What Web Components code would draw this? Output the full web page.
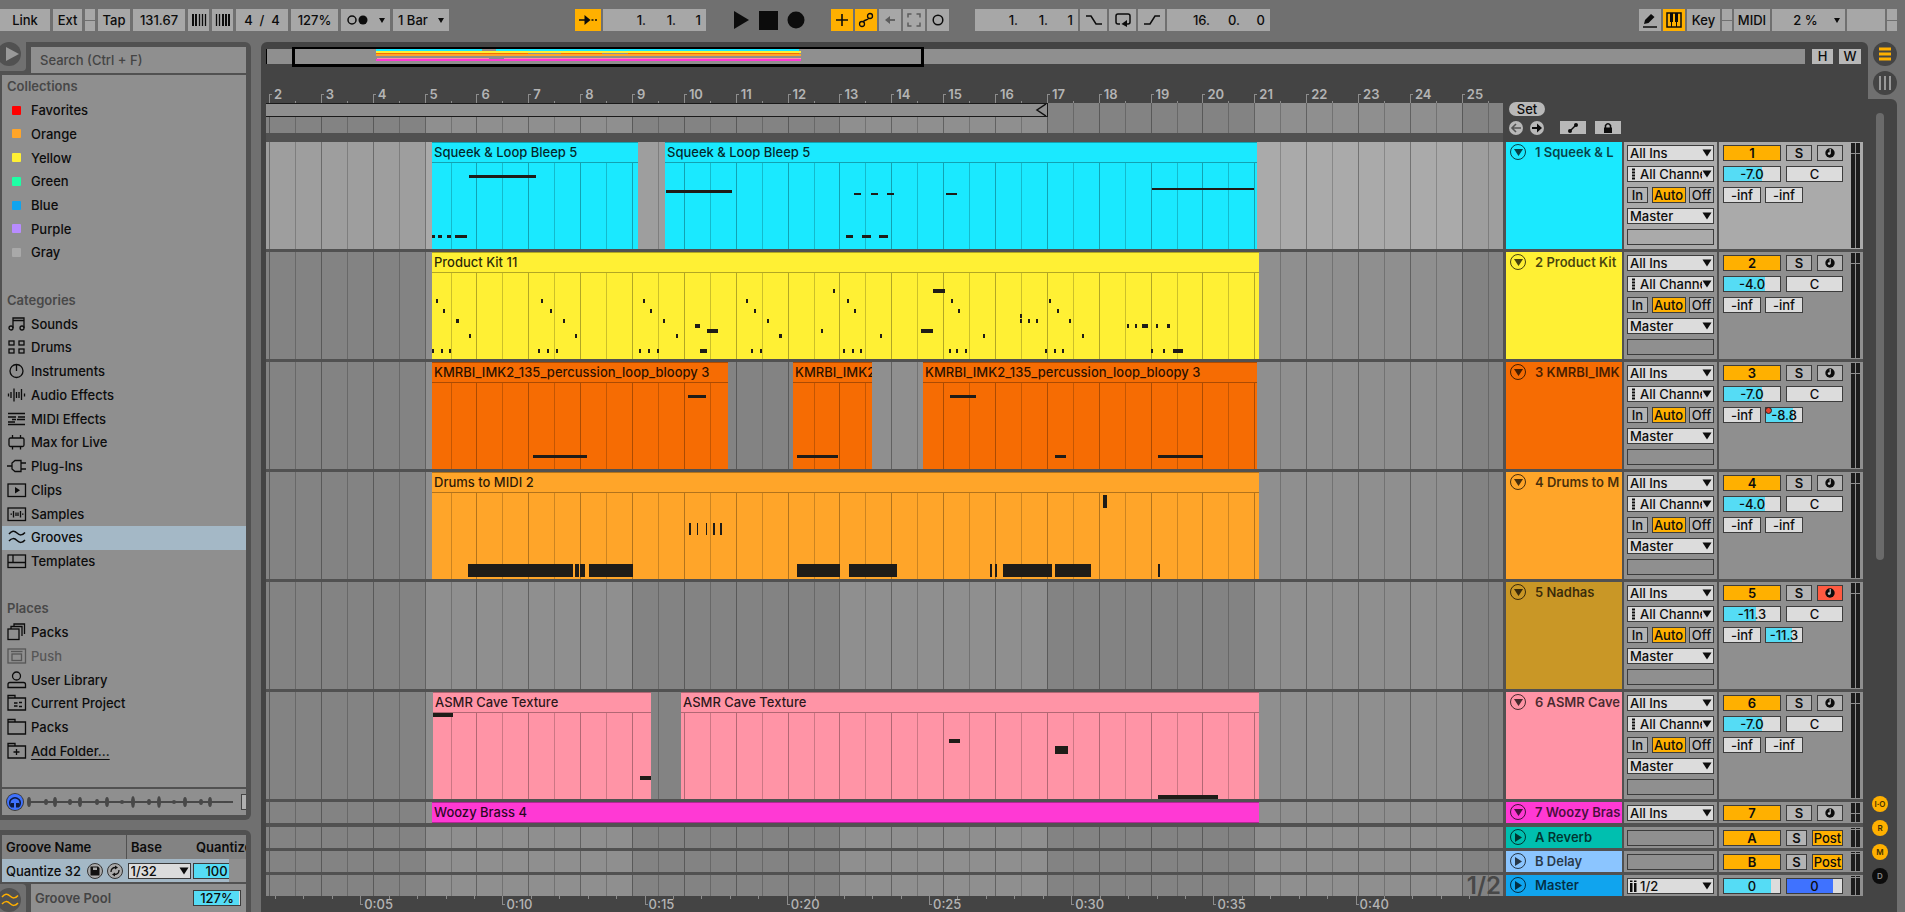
<!DOCTYPE html>
<html lang="en">
<head>
<meta charset="utf-8">
<title>Arrangement</title>
<style>
  html, body { height: 100%; margin: 0; }
  body {
    background: #707070;
    color: #0c0c0c;
    font: 500 13px/16px Inter, "Liberation Sans", sans-serif;
    overflow: hidden;
  }
</style>
</head>
<body>
<daw-app></daw-app>

<script>
// ---------- helpers ----------
const define = (name, html, setup) => {
  const template = document.createElement('template');
  template.innerHTML = html;
  customElements.define(name, class extends HTMLElement {
    connectedCallback() {
      if (this.shadowRoot) return;
      this.attachShadow({ mode: 'open' }).appendChild(template.content.cloneNode(true));
      if (setup) setup(this, this.shadowRoot);
    }
  });
};

// ---------- icons ----------
const line = 'fill="none" stroke="currentColor" stroke-width="1.3"';
const ICONS = {
  play: [18, 18, '<path d="M2 0L17 9L2 18z" fill="currentColor"/>'],
  stop: [19, 19, '<rect width="19" height="19" fill="currentColor"/>'],
  record: [18, 18, '<circle cx="9" cy="9" r="8.500" fill="currentColor"/>'],
  nudgeDown: [16, 14, '<path d="M2 1v12M5 1v12" stroke="currentColor" stroke-width="2"/><path d="M8.500 1v12M11.500 1v12M14.500 1v12" stroke="currentColor" stroke-width="1.300"/>'],
  nudgeUp: [16, 14, '<path d="M1.500 1v12M4.500 1v12" stroke="currentColor" stroke-width="1.300"/><path d="M8 1v12M11 1v12M14 1v12" stroke="currentColor" stroke-width="2"/>'],
  metro: [22, 12, '<circle cx="6" cy="6" r="4" fill="none" stroke="currentColor" stroke-width="1.500"/><circle cx="17" cy="6" r="4.500" fill="currentColor"/>'],
  follow: [20, 12, '<path d="M1 6h7M13.500 6h2M17 6h2" stroke="currentColor" stroke-width="1.600"/><path d="M6.500 1L12.500 6L6.500 11z" fill="currentColor"/>'],
  plus: [14, 14, '<path d="M7 1v12M1 7h12" stroke="currentColor" stroke-width="1.600"/>'],
  automation: [16, 16, `<g ${line}><circle cx="4" cy="12" r="2.500"/><circle cx="12" cy="4" r="2.500"/><path d="M5 10C7 7 9 9 11 6"/></g>`],
  back: [12, 12, '<path d="M3 6h8" stroke="currentColor" stroke-width="1.800"/><path d="M1 6L6 2v8z" fill="currentColor"/>'],
  corners: [14, 14, '<path d="M1 4.500V1h3.500M9.500 1H13v3.500M13 9.500V13H9.500M4.500 13H1V9.500" fill="none" stroke="currentColor" stroke-width="1.500"/>'],
  circle: [12, 12, '<circle cx="6" cy="6" r="4.800" fill="none" stroke="currentColor" stroke-width="1.500"/>'],
  punchIn: [18, 14, '<path d="M1 3h5L11 11h6" fill="none" stroke="currentColor" stroke-width="1.500"/>'],
  punchOut: [18, 14, '<path d="M1 11h6L12 3h5" fill="none" stroke="currentColor" stroke-width="1.500"/>'],
  loop: [18, 16, '<path d="M6 12H4Q2 12 2 10V4Q2 2 4 2h10Q16 2 16 4v6Q16 12 14 12h-2" fill="none" stroke="currentColor" stroke-width="1.500"/><path d="M13 8v7L7.500 12z" fill="currentColor"/>'],
  pencil: [16, 16, '<path d="M2 12l1-4 6-6 3.500 3-6 6z" fill="currentColor"/><path d="M1 15h14" stroke="currentColor" stroke-width="1.500"/>'],
  piano: [16, 16, '<rect x="1" y="1" width="14" height="14" fill="none" stroke="currentColor" stroke-width="1.500"/><path d="M5.500 1v14M10.500 1v14" stroke="currentColor"/><path d="M5.500 1v9M10.500 1v9" stroke="currentColor" stroke-width="3"/>'],
  notes: [20, 16, `<g ${line}><path d="M6 12V2h11v10M6 4.500h11"/><circle cx="4" cy="12" r="2"/><circle cx="15" cy="12" r="2"/></g>`],
  drums: [20, 16, `<g ${line}><rect x="2" y="2" width="5" height="4"/><rect x="12" y="2" width="5" height="4"/><rect x="2" y="10" width="5" height="4"/><rect x="12" y="10" width="5" height="4"/></g>`],
  dial: [20, 16, `<g ${line}><circle cx="9.500" cy="8" r="6.500"/><path d="M9.500 1.500V8"/></g>`],
  audio: [20, 16, `<path d="M1.500 6.500v3M4 5v6M7 1.500v13M9.500 5v6M12 5v6M14.500 2v11M17.500 6.500v3" ${line}/>`],
  midi: [20, 16, `<path d="M1 2.500h17M1 13.500h17M1 6h8M11 6h7M5 8.500h4M10 8.500h8M1 11h7" ${line}/>`],
  max: [20, 16, `<g ${line}><rect x="2" y="4" width="15" height="8.500" rx="1.500"/><path d="M5.500 1v3M13.500 1v3M5.500 12.500v3M13.500 12.500v3"/></g>`],
  plug: [20, 16, `<g ${line}><path d="M0 8h5M14 5h5M14 11h5"/><path d="M14 2.500H8L5 5v6l3 2.500h6z"/></g>`],
  clip: [20, 16, `<rect x="1" y="2" width="17.500" height="12.500" ${line}/><path d="M8 5l5 3.200L8 11.500z" fill="currentColor"/>`],
  sample: [20, 16, `<rect x="1" y="2" width="17.500" height="12.500" ${line}/><path d="M3.500 8.200h1.500M6.500 5v6.500M9 6.500v3.500M11 6.500v3.500M13.500 5v6.500M15 8.200h1.500" ${line}/>`],
  groove: [20, 16, `<path d="M2 5Q6 0 10 4T18 3.500M2 12Q6 7.500 10 11.500T18 11" fill="none" stroke="currentColor" stroke-width="1.500"/>`],
  template: [20, 16, `<g ${line}><rect x="1" y="2" width="17.500" height="12.500"/><path d="M1 9.500h17.500M6 2v7.500"/></g>`],
  packs: [20, 18, `<g ${line}><rect x="1" y="6" width="11" height="10.500"/><path d="M4 6V3.500h11V13M7 3.500V1h10.500v10"/></g>`],
  push: [20, 16, `<g ${line}><rect x="1" y="1" width="17.500" height="14"/><rect x="5" y="6" width="9.500" height="6.500"/><path d="M4 3.500h11.500"/></g>`],
  user: [20, 18, `<g ${line}><circle cx="9.500" cy="5" r="4"/><path d="M1 16.500v-3Q1 11.500 3 11.500h13.500Q18.500 11.500 18.500 13.500v3z"/></g>`],
  project: [20, 18, `<g ${line}><path d="M1 16V1.500h7V4h10.500v12zM1 4h7M7 9h3.500M7 12h3.500M12 8.500h3M12 12.500h3"/></g>`],
  folder: [20, 18, `<path d="M1 16V1.500h7V4h10.500v12zM1 4h7" ${line}/>`],
  addFolder: [20, 18, `<path d="M1 16V1.500h7V4h10.500v12zM1 4h7M9.500 7v6M6.500 10h6" ${line}/>`],
  headphones: [16, 16, '<path d="M4 12.500Q1.500 8.500 4 5.500Q8 2 12 5.500Q14.500 8.500 12 12.500" fill="none" stroke="currentColor" stroke-width="1.600"/><path d="M4 9h3v4.500H4zM9 9h3v4.500H9z" fill="currentColor"/>'],
  disk: [12, 12, '<path d="M1.500 1.500h7.500L10.500 3V10.500h-9z" fill="currentColor"/><path d="M4 2.500h4v2.500h-4z" fill="#aaa"/>'],
  swap: [12, 12, `<path d="M2 7Q2 2.500 6.500 2.500M10 5Q10 9.500 5.500 9.500" ${line}/><path d="M6 0.500l3 2L6 4.500zM6 7.500L3 9.500L6 11.500z" fill="currentColor"/>`],
  arm: [10, 10, '<circle cx="5" cy="5" r="4.700" fill="currentColor"/><circle cx="4.200" cy="5.600" r="1.400" fill="#c4c4c4"/><path d="M5.200 5.600V1" stroke="#c4c4c4" stroke-width="1.200"/>'],
  left: [12, 10, '<path d="M2 5h9M6 1L2 5l4 4" fill="none" stroke="currentColor" stroke-width="1.600"/>'],
  right: [12, 10, '<path d="M1 5h8" stroke="currentColor" stroke-width="2"/><path d="M6 0.500L11 5L6 9.500z" fill="currentColor"/>'],
  link: [12, 10, '<path d="M3 8L9 2" stroke="currentColor" stroke-width="1.500"/><circle cx="3" cy="8" r="2" fill="currentColor"/><circle cx="9" cy="2" r="2" fill="currentColor"/>'],
  lock: [12, 12, '<path d="M2 5.500h8V11H2z" fill="currentColor"/><path d="M3.500 6V3.500Q6 0 8.500 3.500V6" fill="none" stroke="currentColor" stroke-width="1.500"/>'],
  dots: [8, 12, '<path d="M3 0.500h3v2H3zM3 3.500h3v2H3zM3 6.500h3v2H3zM3 9.500h3v2H3z" fill="currentColor"/>'],
  stereo: [8, 12, '<path d="M1 3h2.500v9H1zM5 3h2.500v9H5zM1 0.500h2.500v1.500H1zM5 0.500h2.500v1.500H5z" fill="currentColor"/>'],
  down: [10, 8, '<path d="M0.500 0.500h9L5 7.500z" fill="currentColor"/>'],
  rows: [12, 14, '<path d="M0 2h12M0 7h12M0 12h12" stroke="currentColor" stroke-width="3"/>'],
  cols: [14, 14, '<path d="M2 0v14M7 0v14M12 0v14" stroke="currentColor" stroke-width="2"/>']
};

define('daw-icon', `
  <style>:host { display: block; flex: none; } svg { display: block; }</style>
`, (host, root) => {
  const [w, h, body] = ICONS[host.getAttribute('name')];
  root.innerHTML += `<svg width="${w}" height="${h}" viewBox="0 0 ${w} ${h}" aria-hidden="true">${body}</svg>`;
});

// ---------- transport controls ----------
define('tool-button', `
  <style>
    :host { display: block; flex: none; width: var(--w, auto); }
    button {
      display: flex; align-items: center; justify-content: center;
      width: 100%; height: 22px; padding: 0; border: 0;
      background: #a7a7a7; color: inherit; font: inherit;
    }
    :host([on]) button { background: #ffb000; }
    :host([dim]) button { color: #5c5c5c; }
    :host([bare]) button { background: none; }
  </style>
  <button type="button"><slot></slot></button>
`, (host, root) => {
  if (host.title) root.querySelector('button').setAttribute('aria-label', host.title);
});

define('tool-select', `
  <style>
    :host { display: flex; flex: none; align-items: center; width: var(--w); height: 22px; background: #a7a7a7; box-sizing: border-box; padding: 0 5px; }
    select { flex: 1; min-width: 0; padding: 0; border: 0; background: none; appearance: none; color: inherit; font: inherit; text-align: center; }
    :host([start]) select { text-align: left; }
    i { border: 3px solid transparent; border-top: 5px solid; border-bottom: 0; }
  </style>
  <slot></slot><select></select><i></i>
`, (host, root) => {
  const select = root.querySelector('select');
  select.setAttribute('aria-label', host.getAttribute('label'));
  select.innerHTML = `<option>${host.getAttribute('value') || ''}</option>`;
});

define('tool-position', `
  <style>
    :host { display: grid; flex: none; grid-template-columns: 43px 30px 25px; padding-right: 5px; background: #a7a7a7; height: 22px; }
    input { min-width: 0; padding: 0; border: 0; background: none; color: inherit; font: inherit; text-align: right; }
  </style>
`, (host, root) => {
  host.getAttribute('value').split(' ').forEach((part, i) => {
    const input = document.createElement('input');
    input.value = part;
    input.setAttribute('aria-label', host.getAttribute('label') + ' ' + ['bar', 'beat', 'sixteenth'][i]);
    root.append(input);
  });
});

define('tool-nub', `
  <style>
    :host { display: grid; flex: none; width: 10px; height: 22px; gap: 1px; }
    i { background: #a7a7a7; }
  </style>
  <i></i><i></i>
`);

define('daw-transport', `
  <style>
    :host { display: flex; align-items: center; height: 22px; padding: 9px 8px 11px 0; }
    div { display: flex; align-items: center; gap: 2px; }
    .setup { gap: 3px; }
    .mid { gap: 26px; margin-left: 126px; }
    .keys { gap: 9px; }
    .right { margin-left: auto; }
    input { width: 52px; height: 22px; box-sizing: border-box; padding: 0; border: 0; background: #a7a7a7; color: inherit; font: inherit; text-align: center; }
    .pct { width: 47px; }
    .blank { width: 38px; height: 22px; background: #a7a7a7; }
  </style>
  <div class="setup">
    <tool-button style="--w: 50px">Link</tool-button>
    <tool-button style="--w: 29px">Ext</tool-button>
    <tool-nub></tool-nub>
    <tool-button style="--w: 32px">Tap</tool-button>
    <input aria-label="Tempo" value="131.67">
    <tool-button style="--w: 21px" title="Nudge down"><daw-icon name="nudgeDown"></daw-icon></tool-button>
    <tool-button style="--w: 21px" title="Nudge up"><daw-icon name="nudgeUp"></daw-icon></tool-button>
    <input aria-label="Time signature" value="4  /  4">
    <input class="pct" aria-label="Global groove" value="127%">
    <tool-select style="--w: 49px" label="Metronome"><daw-icon name="metro"></daw-icon></tool-select>
    <tool-select start style="--w: 56px" label="Quantization" value="1 Bar"></tool-select>
  </div>
  <div class="mid">
    <div>
      <tool-button on style="--w: 26px" title="Follow"><daw-icon name="follow"></daw-icon></tool-button>
      <tool-position label="Position" value="1. 1. 1"></tool-position>
    </div>
    <div class="keys">
      <tool-button bare title="Play"><daw-icon name="play"></daw-icon></tool-button>
      <tool-button bare title="Stop"><daw-icon name="stop"></daw-icon></tool-button>
      <tool-button bare title="Record"><daw-icon name="record"></daw-icon></tool-button>
    </div>
    <div>
      <tool-button on style="--w: 22px" title="Overdub"><daw-icon name="plus"></daw-icon></tool-button>
      <tool-button on style="--w: 22px" title="Automation arm"><daw-icon name="automation"></daw-icon></tool-button>
      <tool-button dim style="--w: 22px" title="Re-enable automation"><daw-icon name="back"></daw-icon></tool-button>
      <tool-button dim style="--w: 22px" title="Capture"><daw-icon name="corners"></daw-icon></tool-button>
      <tool-button style="--w: 22px" title="Session record"><daw-icon name="circle"></daw-icon></tool-button>
    </div>
    <div>
      <tool-position label="Loop start" value="1. 1. 1"></tool-position>
      <tool-button style="--w: 27px" title="Punch in"><daw-icon name="punchIn"></daw-icon></tool-button>
      <tool-button style="--w: 27px" title="Loop"><daw-icon name="loop"></daw-icon></tool-button>
      <tool-button style="--w: 27px" title="Punch out"><daw-icon name="punchOut"></daw-icon></tool-button>
      <tool-position label="Loop length" value="16. 0. 0"></tool-position>
    </div>
  </div>
  <div class="right">
    <tool-button style="--w: 22px" title="Draw mode"><daw-icon name="pencil"></daw-icon></tool-button>
    <tool-button on style="--w: 22px" title="Computer keyboard"><daw-icon name="piano"></daw-icon></tool-button>
    <tool-button style="--w: 33px">Key</tool-button>
    <tool-nub></tool-nub>
    <tool-button style="--w: 36px">MIDI</tool-button>
    <tool-select style="--w: 73px" label="CPU load" value="2 %"></tool-select>
    <span class="blank"></span>
    <tool-nub></tool-nub>
  </div>
`);

// ---------- browser ----------
define('browser-item', `
  <style>
    :host { display: flex; min-height: 0; }
    a {
      display: grid; grid-template-columns: 20px 1fr; gap: 4px; align-items: center;
      flex: 1; padding: 0 0 1px 5px; color: inherit; text-decoration: none;
    }
    :host([selected]) a { background: #a4b8c6; }
    :host([dim]) { color: #565656; }
    :host([under]) span { text-decoration: underline; text-underline-offset: 3px; }
    i { width: 9px; height: 9px; margin-left: 5px; border-radius: 1px; }
  </style>
  <a href="#"><b></b><span><slot></slot></span></a>
`, (host, root) => {
  const mark = root.querySelector('b');
  const color = host.getAttribute('color');
  mark.innerHTML = color ? `<i style="display:block;background:${color}"></i>` : `<daw-icon name="${host.getAttribute('icon')}"></daw-icon>`;
});

define('browser-panel', `
  <style>
    :host { display: flex; flex-direction: column; flex: 1; min-height: 0; background: #515151; border-radius: 0 6px 6px 0; padding: 0 5px 5px 0; }
    .top { display: flex; }
    .tab { width: 26px; height: 29px; background: #707070; border-radius: 0 0 4px 0; overflow: hidden; }
    .tab button { display: flex; align-items: center; justify-content: center; width: 24px; height: 24px; margin: 0 0 0 -3px; padding: 0 0 0 6px; box-sizing: border-box; border: 0; border-radius: 50%; background: #515151; color: #999; }
    .search { flex: 1; min-width: 0; height: 26px; box-sizing: border-box; margin: 5px 0 0 5px; padding: 0 9px; border: 0; background: #8f8f8f; color: #333; font: inherit; }
    .search::placeholder { color: #444; opacity: 1; }
    nav { display: grid; grid-template-rows: repeat(30, minmax(0, 1fr)); flex: 1; min-height: 0; margin: 2px 0 2px 2px; background: #8f8f8f; }
    h2 { display: flex; align-items: center; margin: 0; padding: 0 0 1px 5px; font: inherit; font-weight: 600; color: #484848; }
    .preview { display: flex; align-items: center; height: 26px; margin-left: 2px; padding-left: 5px; gap: 4px; background: #8f8f8f; overflow: hidden; }
    .preview button { flex: none; padding: 0; width: 16px; height: 16px; border: 0; border-radius: 50%; background: #3f72ff; color: #0d1a40; box-shadow: 0 0 0 1px #3a3a3a; }
    .preview svg { flex: 1; min-width: 0; height: 16px; }
    .preview i { flex: none; width: 4px; height: 14px; border: 1px solid #444; border-right: 0; background: #b0b0b0; }
  </style>
  <div class="top">
    <div class="tab"><button type="button" aria-label="Hide browser"><svg width="13" height="14"><path d="M0 0l13 7l-13 7z" fill="currentColor"/></svg></button></div>
    <input class="search" type="search" aria-label="Search" placeholder="Search (Ctrl + F)">
  </div>
  <nav>
    <h2>Collections</h2>
    <browser-item color="#ff0000">Favorites</browser-item>
    <browser-item color="#ffa529">Orange</browser-item>
    <browser-item color="#fff034">Yellow</browser-item>
    <browser-item color="#1effa5">Green</browser-item>
    <browser-item color="#10a4ee">Blue</browser-item>
    <browser-item color="#b88cff">Purple</browser-item>
    <browser-item color="#a9a9a9">Gray</browser-item>
    <span></span>
    <h2>Categories</h2>
    <browser-item icon="notes">Sounds</browser-item>
    <browser-item icon="drums">Drums</browser-item>
    <browser-item icon="dial">Instruments</browser-item>
    <browser-item icon="audio">Audio Effects</browser-item>
    <browser-item icon="midi">MIDI Effects</browser-item>
    <browser-item icon="max">Max for Live</browser-item>
    <browser-item icon="plug">Plug-Ins</browser-item>
    <browser-item icon="clip">Clips</browser-item>
    <browser-item icon="sample">Samples</browser-item>
    <browser-item icon="groove" selected>Grooves</browser-item>
    <browser-item icon="template">Templates</browser-item>
    <span></span>
    <h2>Places</h2>
    <browser-item icon="packs">Packs</browser-item>
    <browser-item icon="push" dim>Push</browser-item>
    <browser-item icon="user">User Library</browser-item>
    <browser-item icon="project">Current Project</browser-item>
    <browser-item icon="folder">Packs</browser-item>
    <browser-item icon="addFolder" under>Add Folder...</browser-item>
    <span></span>
  </nav>
  <div class="preview">
    <button type="button" aria-label="Preview"><daw-icon name="headphones"></daw-icon></button>
    <svg viewBox="0 0 210 16" preserveAspectRatio="none" fill="#484848"></svg>
    <i></i>
  </div>
`, (host, root) => {
  // small hits alternate with loud ones along the loop
  const hits = [[2, 5], [19, 3], [28, 5], [43, 3], [53, 5], [70, 3], [80, 5], [95, 2], [106, 6], [122, 3], [132, 6], [147, 2], [158, 5], [174, 3], [183, 5], [199, 1]];
  root.querySelector('.preview svg').innerHTML = '<rect y="7" width="206" height="2"/>' +
    hits.map(([x, r]) => `<ellipse cx="${x}" cy="8" rx="2" ry="${r}"/>`).join('');
});

define('groove-pool', `
  <style>
    :host { display: block; background: #515151; border-radius: 0 6px 0 0; padding: 5px 5px 0 2px; }
    .clip { overflow: hidden; background: #838383; }
    table { width: 100%; table-layout: fixed; border-collapse: collapse; }
    th { height: 24px; padding: 0 0 0 3px; text-align: left; font-weight: 600; overflow: hidden; white-space: nowrap; }
    th:first-child { width: 120px; border-right: 1px solid #515151; padding-left: 4px; }
    th:nth-child(2) { width: 62px; padding-left: 4px; }
    td { height: 23px; padding: 0; background: #a4b8c6; }
    td:nth-child(2) { padding-left: 1px; }
    .name { display: flex; align-items: center; gap: 4px; padding: 0 4px; }
    .name span { flex: 1; }
    .name button { display: flex; align-items: center; justify-content: center; width: 16px; height: 16px; box-sizing: border-box; padding: 0; border: 1px solid #333; border-radius: 50%; background: #aaa; color: #111; }
    .amount { display: flex; background: #8f8f8f; }
    .amount span { display: flex; align-items: center; width: 36px; flex: none; height: 23px; overflow: hidden; background: #a4b8c6; }
    .foot { display: flex; align-items: center; margin: 2px 0 0 -2px; height: 28px; }
    .tab { align-self: start; display: flex; width: 26px; height: 28px; background: #707070; border-radius: 0 4px 0 0; align-items: end; }
    .tab button { width: 24px; height: 24px; flex: none; margin: 0 0 0 -3px; padding: 3px; border: 0; border-radius: 50%; background: #515151; color: #ffb000; }
    .pool { display: flex; flex: 1; height: 28px; align-items: center; justify-content: space-between; margin-left: 5px; padding: 0 5px 0 4px; background: #8f8f8f; color: #444; font-weight: 600; }
    .pool strip-value { color: #0c0c0c; font-weight: 500; }
  </style>
  <div class="clip"><table>
    <thead><tr><th>Groove Name</th><th>Base</th><th>Quantize</th></tr></thead>
    <tbody><tr>
      <td><div class="name"><span>Quantize 32</span>
        <button type="button" aria-label="Save groove"><daw-icon name="disk"></daw-icon></button>
        <button type="button" aria-label="Hot-swap groove"><daw-icon name="swap"></daw-icon></button></div></td>
      <td><strip-select style="--w: 63px" label="Base" value="1/32"></strip-select></td>
      <td><div class="amount"><span><strip-value style="--w: 47px; --fill: 100%" label="Quantize" value="100"></strip-value></span></div></td>
    </tr></tbody>
  </table></div>
  <div class="foot">
    <div class="tab"><button type="button" aria-label="Groove pool"><daw-icon name="groove"></daw-icon></button></div>
    <div class="pool"><span>Groove Pool</span><strip-value style="--w: 48px; --fill: 97%" label="Groove amount" value="127%"></strip-value></div>
  </div>
`);

// ---------- track strip controls ----------
define('strip-select', `
  <style>
    :host { display: flex; align-items: center; flex: none; width: var(--w, auto); height: 16px; box-sizing: border-box; border: 1px solid #3c3c3c; padding: 0 1px; background: #dcdcdc; overflow: hidden; }
    select { flex: 1; min-width: 0; height: 14px; padding: 0 0 0 1px; border: 0; background: none; appearance: none; color: inherit; font: inherit; line-height: 14px; overflow: hidden; text-overflow: clip; }
  </style>
  <select></select><daw-icon name="down"></daw-icon>
`, (host, root) => {
  const select = root.querySelector('select');
  const icon = host.getAttribute('icon');
  select.setAttribute('aria-label', host.getAttribute('label'));
  select.innerHTML = `<option>${host.getAttribute('value')}</option>`;
  if (icon) {
    const el = document.createElement('daw-icon');
    el.setAttribute('name', icon);
    el.style.marginRight = '2px';
    root.insertBefore(el, select);
  }
});

define('strip-value', `
  <style>
    :host { display: block; flex: none; width: var(--w); height: 16px; }
    input {
      display: block; width: 100%; height: 16px; box-sizing: border-box; padding: 0; border: 1px solid #3c3c3c;
      background: linear-gradient(to right, var(--bar, #55dcf5) var(--fill, 0%), #dcdcdc var(--fill, 0%));
      color: inherit; font: inherit; text-align: center;
    }
    :host([marked]) { position: relative; }
    :host([marked])::before { content: ""; position: absolute; left: 0; top: 0; width: 5px; height: 5px; border: 1px solid #222; border-radius: 50%; background: #e8432e; }
  </style>
  <input>
`, (host, root) => {
  const input = root.querySelector('input');
  input.value = host.getAttribute('value');
  input.setAttribute('aria-label', host.getAttribute('label'));
});

define('strip-button', `
  <style>
    :host { display: block; flex: none; width: var(--w); height: 16px; }
    button { display: flex; align-items: center; justify-content: center; width: 100%; height: 16px; box-sizing: border-box; padding: 0; border: 1px solid #3c3c3c; background: #b4b4b4; color: inherit; font: inherit; overflow: hidden; }
    :host([on]) button { background: #ffb000; }
    :host([armed]) button { background: #ff5a41; }
    :host([strong]) button { font-weight: 600; }
  </style>
  <button type="button"><slot></slot></button>
`, (host, root) => {
  if (host.title) root.querySelector('button').setAttribute('aria-label', host.title);
});

// ---------- timeline geometry ----------
// The visible span is 1237 units wide; bar 2 starts 3 units in.
const SPAN = 1237, BAR = 51.86, ORIGIN = 3 - 2 * BAR;
const barAt = n => ORIGIN + n * BAR;
const pct = u => (u / SPAN * 100).toFixed(3) + '%';
const halfBars = () => Array.from({ length: 48 }, (_, i) => 2 + i / 2);

const gridSvg = (light, dark) => {
  const bands = [1, 9, 17, 25].map(n => {
    const from = Math.max(0, barAt(n));
    return `<rect x="${pct(from)}" width="${pct(Math.min(SPAN, barAt(n + 4)) - from)}" height="100%" fill="${dark}"/>`;
  }).join('');
  const lines = halfBars().map(n => `<rect x="${pct(barAt(n))}" width="1" height="100%" fill="#000" fill-opacity="${n % 1 ? .2 : .32}"/>`).join('');
  return `<svg width="100%" height="100%" shape-rendering="crispEdges" style="background:${light}" aria-hidden="true">${bands}${lines}</svg>`;
};

// ---------- tracks ----------
const row = (y, h, list) => list.map(n => Array.isArray(n) ? [n[0], y, n[1], h] : [n, y, 2, h]);
const TRACKS = [
  {
    name: '1 Squeek & L', id: '1', color: '#1ae9ff', volume: '-7.0', fill: 67, sends: [['-inf', 0], ['-inf', 0]], lit: true,
    clips: [[166, 372, 'Squeek & Loop Bleep 5'], [399, 991, 'Squeek & Loop Bleep 5']],
    notes: [...row(33, 3, [[203, 67]]), ...row(93, 3, [[166, 3], [172, 4], [181, 4], [189, 12], [580, 7], [596, 9], [613, 9]]),
      ...row(48, 3, [[400, 66]]), ...row(51, 2, [[588, 7], [605, 7], [621, 7], [680, 11]]), ...row(46, 2, [[886, 102]])]
  },
  {
    name: '2 Product Kit', id: '2', color: '#fff034', volume: '-4.0', fill: 74, sends: [['-inf', 0], ['-inf', 0]],
    clips: [[166, 993, 'Product Kit 11']],
    notes: [...row(37, 4, [567, [667, 12]]), ...row(47, 4, [170, 275, 377, 480, 581, 685, 783]),
      ...row(57, 4, [177, 284, 384, 488, 588, 692, 791]), ...row(62, 4, [754]),
      ...row(67, 4, [[190, 3], 297, 397, 501, 754, 762, 770, 803]),
      ...row(72, 4, [[429, 5], 861, 869, [876, 6], 890, [901, 3]]), ...row(77, 4, [[441, 11], 555, [655, 12]]),
      ...row(82, 4, [203, 309, 410, [513, 3], 614, 717, 816]),
      ...row(97, 4, [166, 175, 183, 272, 281, 290, 373, 382, 391, [434, 7], 485, 494, 577, 586, 594, 683, 690, 699, 779, 788, 796, 885, 897, [907, 10]])]
  },
  {
    name: '3 KMRBI_IMK', id: '3', color: '#f66c03', volume: '-7.0', fill: 67, sends: [['-inf', 0], ['-8.8', 76, true]],
    clips: [[166, 462, 'KMRBI_IMK2_135_percussion_loop_bloopy 3'], [527, 606, 'KMRBI_IMK2'], [657, 991, 'KMRBI_IMK2_135_percussion_loop_bloopy 3']],
    notes: [...row(33, 3, [[422, 18], [684, 26]]), ...row(93, 3, [[267, 54], [531, 41], [789, 11], [892, 45]])]
  },
  {
    name: '4 Drums to M', id: '4', color: '#ffa529', volume: '-4.0', fill: 74, sends: [['-inf', 0], ['-inf', 0]],
    clips: [[166, 993, 'Drums to MIDI 2']],
    notes: [...row(92, 13, [[202, 105], [309, 4], [314, 5], [323, 44], [531, 43], [583, 48], 724, 729, [737, 49], [789, 36], 892]),
      ...row(51, 12, [423, [431, 1], [440, 1], 447, 454]), ...row(23, 13, [[837, 4]])]
  },
  {
    name: '5 Nadhas', id: '5', color: '#c99726', volume: '-11.3', fill: 57, sends: [['-inf', 0], ['-11.3', 71]], armed: true,
    clips: [], notes: []
  },
  {
    name: '6 ASMR Cave', id: '6', color: '#ff94a6', volume: '-7.0', fill: 67, sends: [['-inf', 0], ['-inf', 0]],
    clips: [[167, 385, 'ASMR Cave Texture'], [415, 993, 'ASMR Cave Texture']],
    notes: [...row(21, 4, [[167, 20]]), ...row(84, 4, [[374, 11]]), ...row(47, 4, [[683, 11]]), ...row(54, 8, [[789, 13]]), ...row(103, 4, [[892, 60]])]
  },
  { name: '7 Woozy Bras', id: '7', color: '#ff39d4', kind: 'folded', clips: [[166, 993, 'Woozy Brass 4']], notes: [] },
  { name: 'A Reverb', id: 'A', color: '#00bfaf', kind: 'return', clips: [], notes: [] },
  { name: 'B Delay', id: 'B', color: '#8bc5ff', kind: 'return', clips: [], notes: [] },
  { name: 'Master', id: 'M', color: '#10a4ee', kind: 'master', clips: [], notes: [] }
];

define('track-lane', `
  <style>
    :host { display: block; position: relative; flex: 1; min-width: 0; overflow: hidden; }
    svg, .clip { position: absolute; top: 0; height: 100%; }
    svg { left: 0; }
    .clip { box-sizing: border-box; overflow: hidden; border-top: 1px solid rgba(0, 0, 0, .3); }
    .clip span { display: block; height: 19px; padding-left: 2px; border-bottom: 1px solid rgba(0, 0, 0, .3); line-height: 19px; white-space: nowrap; color: rgba(0, 0, 0, .85); }
    .grid { position: absolute; right: 2px; top: 0; font-size: 24px; line-height: 21px; font-weight: 600; color: #484848; }
  </style>
`, (host, root) => {
  const t = host.track;
  let html = t.lit ? gridSvg('#aaaaaa', '#9e9e9e') : gridSvg('#8f8f8f', '#838383');
  html += t.clips.map(([a, b, label]) =>
    `<div class="clip" style="left:${pct(a)};width:${pct(b - a)};background:${t.color}"><span>${label.replace('&', '&amp;')}</span></div>`).join('');
  if (t.clips.length && !t.kind) {
    const inClip = u => t.clips.some(([a, b]) => u > a && u < b);
    html += '<svg width="100%" height="100%" shape-rendering="crispEdges" aria-hidden="true">' +
      halfBars().map(n => inClip(barAt(n)) ? `<rect x="${pct(barAt(n))}" y="21" width="1" height="100%" fill="#000" fill-opacity="${n % 1 ? .2 : .3}"/>` : '').join('') +
      t.notes.map(([x, y, w, h]) => `<rect x="${pct(x)}" y="${y}" width="${pct(w)}" height="${h}" fill="#1f1c18"/>`).join('') + '</svg>';
  }
  if (t.kind === 'master') html += '<span class="grid">1/2</span>';
  root.innerHTML += html;
});

define('track-row', `
  <style>
    :host { display: flex; }
    .head { display: grid; flex: none; grid-template-columns: 116px 93px 144px; gap: 2px; margin-left: 3px; }
    .title { display: flex; align-items: start; gap: 9px; padding: 2px 0 0 4px; overflow: hidden; white-space: nowrap; font-weight: 600; color: rgba(0, 0, 0, .72); }
    .title button { flex: none; display: flex; align-items: center; justify-content: center; width: 16px; height: 16px; margin: 0; padding: 0; box-sizing: border-box; border: 1px solid currentColor; border-radius: 50%; background: none; color: inherit; }
    .io, .mix { background: #8f8f8f; padding: 3px 3px 2px; }
    .lit .io, .lit .mix { background: #aaa; }
    .io { display: flex; flex-direction: column; gap: 5px; }
    .full .io { padding-bottom: 4px; }
    .mix { display: flex; justify-content: space-between; padding: 3px 3px 0 4px; }
    .knobs { display: flex; flex-direction: column; gap: 5px; }
    .line { display: flex; justify-content: space-between; }
    .knobs .line { width: 120px; }
    .knobs .sends { justify-content: start; gap: 4px; }
    .blank { height: 14px; border: 1px solid #3c3c3c; }
    .meter { display: flex; gap: 1px; margin: -2px 0 1px; background: #8f8f8f; }
    .meter i { width: 4px; background: linear-gradient(#1c1c1c 10px, #8f8f8f 10px, #8f8f8f 11px, #1c1c1c 11px); }
    .short .meter i { background: linear-gradient(#1c1c1c 1px, #8f8f8f 1px, #8f8f8f 2px, #1c1c1c 2px); }
  </style>
  <div class="head"></div>
`, (host, root) => {
  const t = host.track;
  const head = root.querySelector('.head');
  const lane = document.createElement('track-lane');
  lane.track = t;
  root.insertBefore(lane, head);

  const full = !t.kind;
  const closed = t.kind === 'return' || t.kind === 'master';
  head.className = 'head' + (t.lit ? ' lit' : '') + (full ? ' full' : '') + (closed ? ' short' : '');

  let io = '<strip-select label="Input type" value="All Ins"></strip-select>';
  if (t.kind === 'return') io = '<div class="blank"></div>';
  if (t.kind === 'master') io = '<strip-select label="Cue out" icon="stereo" value="1/2"></strip-select>';
  if (full) io += `
    <strip-select label="Input channel" icon="dots" value="All Channels"></strip-select>
    <div class="line">
      <strip-button style="--w: 21px">In</strip-button>
      <strip-button on style="--w: 34px">Auto</strip-button>
      <strip-button style="--w: 25px">Off</strip-button>
    </div>
    <strip-select label="Output" value="Master"></strip-select>
    <div class="blank"></div>`;

  let mix;
  if (t.kind === 'master') {
    mix = `<div class="line">
      <strip-value style="--w: 58px; --fill: 84%" label="Master volume" value="0"></strip-value>
      <strip-value style="--w: 57px; --fill: 84%; --bar: #3f72ff" label="Cue volume" value="0"></strip-value></div>`;
  } else if (t.kind === 'return') {
    mix = `<div class="line"><strip-button on strong style="--w: 58px">${t.id}</strip-button>
      <strip-button strong style="--w: 21px">S</strip-button><strip-button on style="--w: 31px">Post</strip-button></div>`;
  } else {
    mix = `<div class="line"><strip-button on strong style="--w: 58px">${t.id}</strip-button>
      <strip-button strong style="--w: 26px">S</strip-button>
      <strip-button ${t.armed ? 'armed' : ''} style="--w: 26px" title="Arm"><daw-icon name="arm"></daw-icon></strip-button></div>`;
  }
  if (full) mix += `
    <div class="line"><strip-value style="--w: 58px; --fill: ${t.fill}%" label="Volume" value="${t.volume}"></strip-value>
      <strip-value style="--w: 57px" label="Pan" value="C"></strip-value></div>
    <div class="line sends">${t.sends.map(([v, fill, marked], i) =>
      `<strip-value ${marked ? 'marked' : ''} style="--w: 38px; --fill: ${fill}%" label="Send ${'AB'[i]}" value="${v}"></strip-value>`).join('')}</div>`;

  const arrow = closed ? '<path d="M1 0l7 4.500l-7 4.500z" fill="currentColor"/>' : '<path d="M0 1h9L4.500 8z" fill="currentColor"/>';
  head.innerHTML = `
    <div class="title" style="background:${t.color}">
      <button type="button" aria-label="Fold track"><svg width="9" height="9">${arrow}</svg></button><span>${t.name.replace('&', '&amp;')}</span></div>
    <div class="io">${io}</div>
    <div class="mix"><div class="knobs">${mix}</div><div class="meter"><i></i><i></i></div></div>`;
});

// ---------- rulers ----------
define('overview-bar', `
  <style>
    :host { display: flex; align-items: start; gap: 6px; height: 20px; box-sizing: border-box; padding-top: 2px; }
    .map { position: relative; flex: 1; height: 15px; margin-right: 1px; background: #8f8f8f; border-left: 1px solid #000; }
    .map svg { display: block; }
    .view { position: absolute; top: -2px; bottom: -3px; left: 1.6%; width: 41.1%; box-sizing: border-box; border: 2px solid #000; border-width: 2px 3px 3px; }
    button { width: 22px; height: 15px; padding: 0; border: 0; background: #b8b8b8; color: inherit; font: inherit; line-height: 15px; }
    button:first-of-type { width: 21px; }
  </style>
  <div class="map"><svg width="100%" height="15" shape-rendering="crispEdges" aria-hidden="true"></svg><div class="view"></div></div>
  <button type="button">H</button>
  <button type="button">W</button>
`, (host, root) => {
  // whole song is 57.8 bars long; the empty track keeps its own line
  const at = u => ((u - ORIGIN) / BAR - 1.04) / 57.8 * 100;
  const lines = [0, 2, 4, 5, 7, 9, 10];
  root.querySelector('svg').innerHTML = TRACKS.slice(0, 7).map((t, i) => t.clips.map(([a, b]) =>
    `<rect x="${at(a)}%" width="${at(b) - at(a)}%" y="${lines[i]}" height="2" fill="${t.color}"/>`).join('')).join('');
});

define('bar-ruler', `
  <style>
    :host { display: block; position: relative; height: 36px; color: #b4b4b4; overflow: hidden; font-weight: 600; }
    span { position: absolute; bottom: 0; height: 9px; padding-left: 4px; border-left: 1px solid #8c8c8c; line-height: 1px; }
    span::before { content: ""; position: absolute; left: 0; top: 0; width: 2px; height: 1px; background: #8c8c8c; }
    i { position: absolute; bottom: 0; width: 1px; height: 2px; background: #8c8c8c; }
  </style>
`, (host, root) => {
  root.innerHTML += halfBars().map(n => n % 1 ? `<i style="left:${pct(barAt(n))}"></i>` : `<span style="left:${pct(barAt(n))}">${n}</span>`).join('');
});

define('loop-ruler', `
  <style>
    :host { display: block; position: relative; height: 30px; }
    div { position: absolute; left: 0; top: 0; height: 14px; box-sizing: border-box; border: 1px solid #1a1a1a; border-width: 1px 1px 1px 0; background: #8f8f8f; }
    .arrow { position: absolute; right: 0; top: 0; }
  </style>
`, (host, root) => {
  root.innerHTML += gridSvg('#8f8f8f', '#838383') +
    `<div style="width:${pct(barAt(17) + 1)}"><svg class="arrow" width="12" height="12"><path d="M11 0L2 6l9 6" fill="none" stroke="#111" stroke-width="1.500"/></svg></div>`;
});

define('time-ruler', `
  <style>
    :host { display: block; position: relative; flex: 1; min-height: 0; overflow: hidden; color: #b4b4b4; }
    span { position: absolute; top: 0; height: 9px; padding-left: 3px; border-left: 1px solid #8c8c8c; line-height: 17px; }
    span::before { content: ""; position: absolute; left: 0; bottom: 0; width: 2px; height: 1px; background: #8c8c8c; }
    i { position: absolute; top: 0; width: 1px; height: 3px; background: #8c8c8c; }
  </style>
`, (host, root) => {
  const SECOND = 28.44;
  let html = '';
  for (let s = 2; s < 46; s++) {
    const left = pct(SECOND * s - 48);
    html += s % 5 ? `<i style="left:${left}"></i>` : s < 45 ? `<span style="left:${left}">0:${String(s).padStart(2, '0')}</span>` : '';
  }
  root.innerHTML += html;
});

define('locator-tools', `
  <style>
    :host { display: flex; flex-direction: column; align-items: start; gap: 5px; padding: 35px 0 0 6px; }
    button { display: flex; align-items: center; justify-content: center; padding: 0; border: 0; background: #b8b8b8; color: #0c0c0c; font: inherit; height: 14px; }
    .set { width: 36px; border-radius: 7px; }
    div { display: flex; }
    .round { width: 14px; border-radius: 50%; margin-right: 7px; }
    .box { width: 26px; margin-left: 9px; height: 13px; }
    .dim { color: #555; }
  </style>
  <button class="set" type="button">Set</button>
  <div>
    <button class="round dim" type="button" aria-label="Previous locator"><daw-icon name="left"></daw-icon></button>
    <button class="round" type="button" aria-label="Next locator"><daw-icon name="right"></daw-icon></button>
    <button class="box" type="button" aria-label="Automation mode"><daw-icon name="link"></daw-icon></button>
    <button class="box" type="button" aria-label="Lock envelopes"><daw-icon name="lock"></daw-icon></button>
  </div>
`);

define('arrangement-view', `
  <style>
    :host { display: flex; flex-direction: column; flex: 1; min-width: 0; background: #444; border-radius: 6px 6px 0 0; padding: 5px 5px 0; }
    .top { display: flex; }
    .rulers { flex: 1; min-width: 0; }
    locator-tools { flex: none; width: 354px; }
    .strip { height: 9px; background: #515151; }
    .tracks { display: flex; flex-direction: column; gap: 3px; background: #515151; }
    .returns { display: flex; flex-direction: column; gap: 3px; margin-top: 1px; }
    .bottom { display: flex; flex: 1; min-height: 0; padding-right: 360px; }
    overview-bar { margin-right: 2px; }
  </style>
  <overview-bar></overview-bar>
  <div class="top">
    <div class="rulers"><bar-ruler></bar-ruler><loop-ruler></loop-ruler><div class="strip"></div></div>
    <locator-tools></locator-tools>
  </div>
  <div class="tracks"><div class="returns"></div></div>
  <div class="bottom"><time-ruler></time-ruler></div>
`, (host, root) => {
  const returns = root.querySelector('.returns');
  TRACKS.forEach(t => {
    const el = document.createElement('track-row');
    el.track = t;
    if (t.kind === 'return' || t.kind === 'master') returns.append(el);
    else returns.before(el);
  });
});

define('view-rail', `
  <style>
    :host { display: flex; flex-direction: column; flex: none; width: 29px; }
    .tabs { display: flex; flex-direction: column; align-items: end; gap: 5px; height: 57px; }
    button { display: flex; align-items: center; justify-content: center; padding: 0; border: 0; border-radius: 50%; }
    .tabs button { width: 24px; height: 24px; background: #444; color: #ffb000; }
    .tabs button + button { color: #999; }
    .body { display: flex; flex-direction: column; justify-content: space-between; align-items: center; flex: 1; min-height: 0; padding: 14px 5px 28px 0; background: #444; border-radius: 0 6px 0 0; }
    .bar { width: 8px; height: 58%; border-radius: 4px; background: #6a6a6a; }
    .toggles { display: flex; flex-direction: column; gap: 8px; }
    .toggles button { width: 16px; height: 16px; background: #ffb000; color: #443000; font: 600 8px/16px Inter, sans-serif; }
    .toggles .off { background: #0c0c0c; color: #888; }
  </style>
  <div class="tabs">
    <button type="button" aria-label="Arrangement view"><daw-icon name="rows"></daw-icon></button>
    <button type="button" aria-label="Session view"><daw-icon name="cols"></daw-icon></button>
  </div>
  <div class="body">
    <div class="bar"></div>
    <div class="toggles">
      <button type="button">I·O</button>
      <button type="button">R</button>
      <button type="button">M</button>
      <button type="button" class="off">D</button>
    </div>
  </div>
`);

define('daw-app', `
  <style>
    :host { display: flex; flex-direction: column; height: 100vh; overflow: hidden; }
    main { display: flex; flex: 1; min-height: 0; padding-right: 8px; }
    .side { display: flex; flex-direction: column; flex: none; width: 251px; gap: 10px; margin-right: 10px; }
  </style>
  <daw-transport></daw-transport>
  <main>
    <div class="side"><browser-panel></browser-panel><groove-pool></groove-pool></div>
    <arrangement-view></arrangement-view>
    <view-rail></view-rail>
  </main>
`);
</script>
</body>
</html>
